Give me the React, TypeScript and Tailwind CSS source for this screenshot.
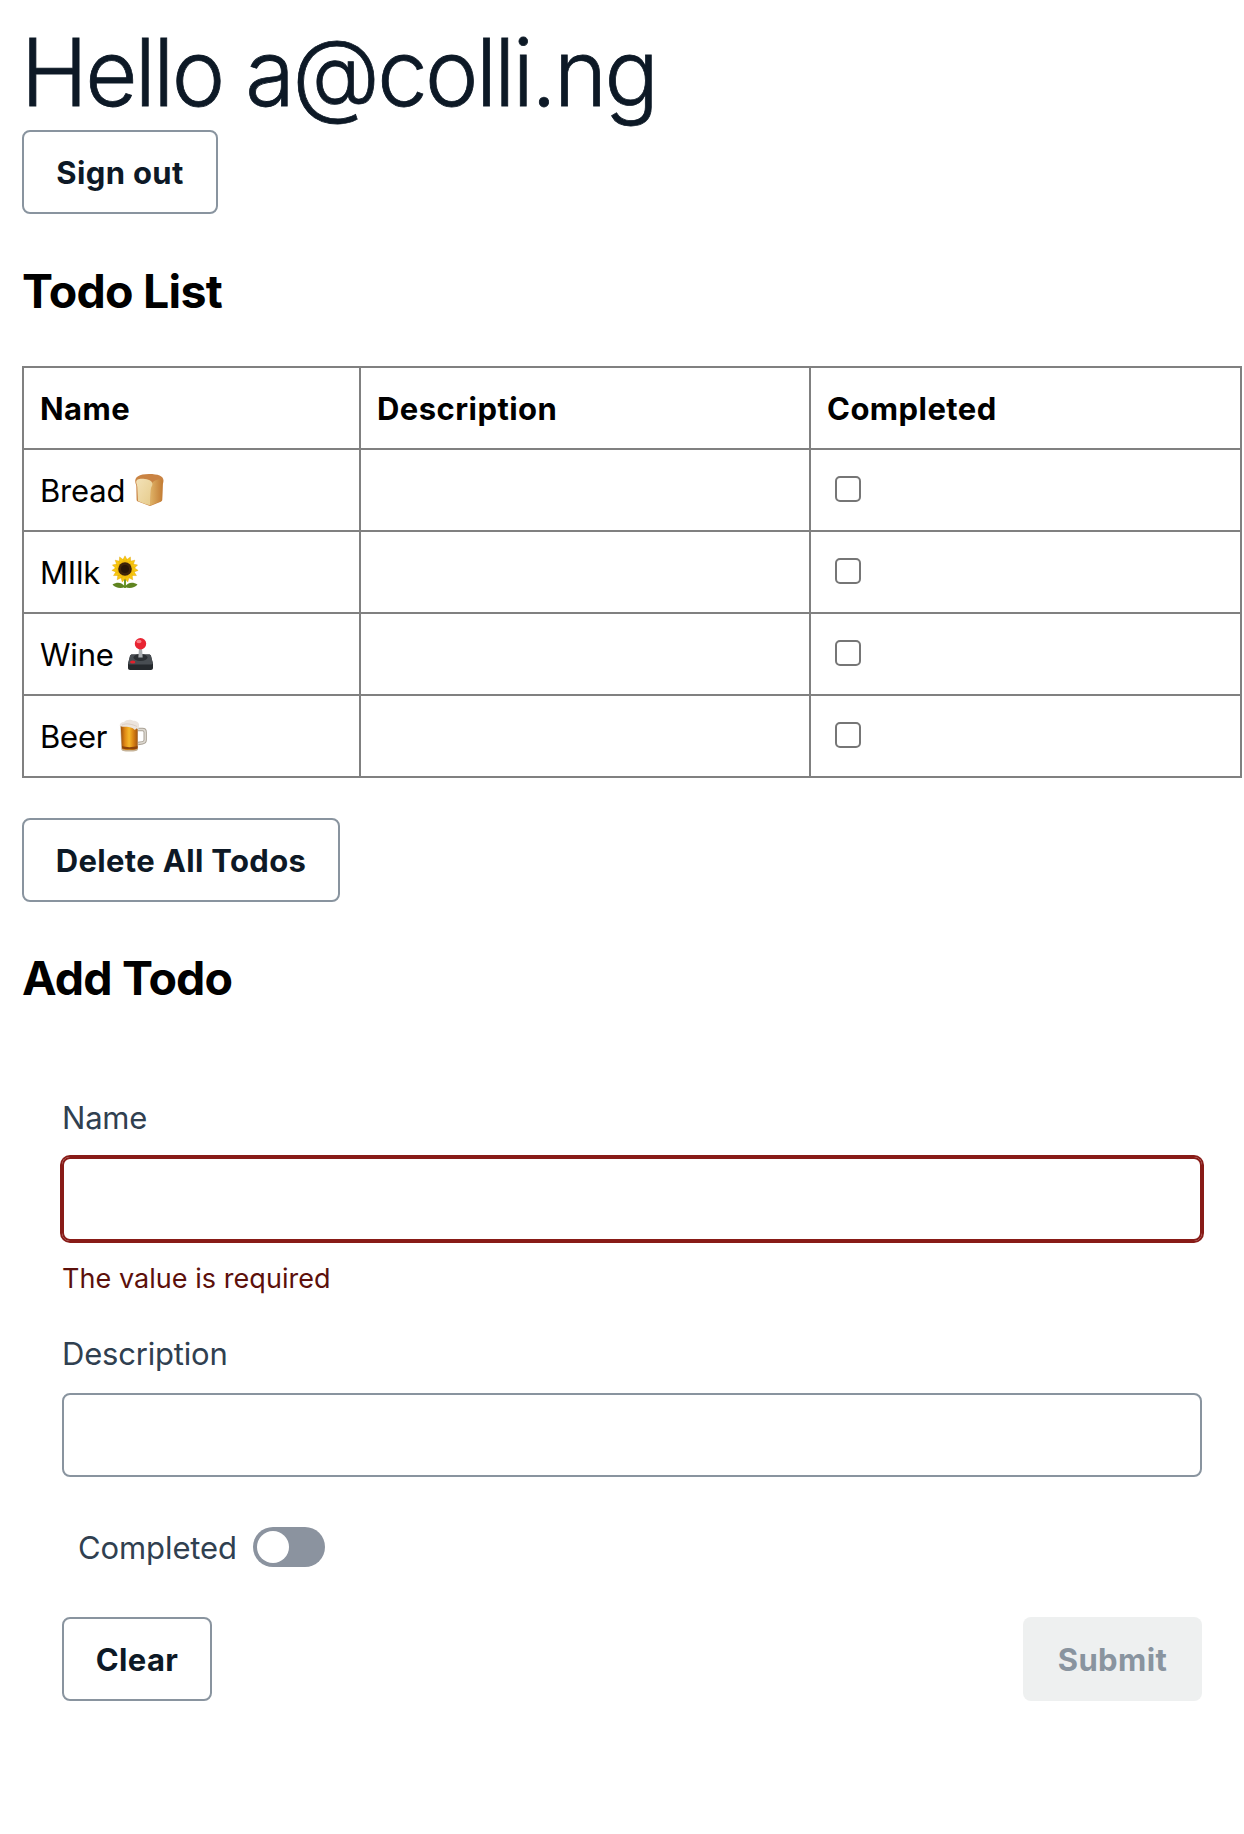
import type { ReactNode } from "react";

function Bread() {
  return (
    <svg width="32" height="34" viewBox="0 0 32 34" aria-label="bread">
      <defs>
        <linearGradient id="side" x1="0" x2="1">
          <stop offset="0" stopColor="#e0b468" />
          <stop offset="1" stopColor="#c27b33" />
        </linearGradient>
        <linearGradient id="slice" x1="0" x2="1" y2="1">
          <stop offset="0" stopColor="#f3e2b8" />
          <stop offset="1" stopColor="#e6cb8b" />
        </linearGradient>
      </defs>
      <path d="M1.300 9C.6 4 5 1 15 1c9 0 14.500 2 14.500 6.500 0 2-.8 3.500-.9 5l-.3 14c0 1-.5 1.600-1.500 2.200L17.500 32.500c-1 .5-2 .5-3 0L4 28.500c-1-.4-1.400-1-1.400-2L2.300 13c0-1.500-.8-2-1-4Z" fill="#c98343" />
      <path d="M17 14c-.5-4 3-6.500 7-7.500 3-.6 5 .3 4.800 3L28 26.500c0 .8-.4 1.300-1.200 1.700L16 32.500Z" fill="url(#side)" />
      <path d="M2.200 9.500C2 6 6 5.300 11 6c5 .8 8 2.500 7.300 6-.3 1.500-1.300 2-1.400 4L16 32.200c-4-1-8-2.300-12-4.200L3.300 14c0-2-1-3-1.100-4.500Z" fill="url(#slice)" />
    </svg>
  );
}

const PETALS = [0, 24, 48, 72, 96, 120, 144, 168, 192, 216, 240, 264, 288, 312, 336];

function Sunflower() {
  return (
    <svg width="28" height="34" viewBox="0 0 28 34" aria-label="sunflower">
      <path d="M13 24h2v9h-2z" fill="#6d9a2b" />
      <path d="M14 32C11 27 6 27 1.500 29.500 4 33 10 34 14 32ZM14 32c3-5 8-5 12.500-2.500C24 33 18 34 14 32Z" fill="#5f8420" />
      {PETALS.map((angle) => (
        <path key={angle} d="M14 14L11.200 6 14 .8 16.800 6Z" fill="#f8c80f" stroke="#e0a208" strokeWidth=".4" transform={`rotate(${angle} 14 14)`} />
      ))}
      <circle cx="14" cy="14" r="8.300" fill="#f3bd0c" />
      <circle cx="14" cy="14" r="6.800" fill="#3f2409" />
      <circle cx="14" cy="14" r="4" fill="#281606" />
    </svg>
  );
}

function Joystick() {
  return (
    <svg width="28" height="34" viewBox="0 0 28 34" aria-label="joystick">
      <path d="M5 17.500h17c1 0 1.700.5 2 1.500l2 8v4c0 1.200-1 2-2 2H3c-1.200 0-2-.8-2-2v-4l2-8c.3-1 1-1.500 2-1.500Z" fill="#25292d" />
      <path d="M5 17.500h17c1 0 1.700.5 2 1.500l1.800 7c0 1-.8 1.500-1.800 1.500H3c-1 0-1.800-.5-1.800-1.500L3 19c.3-1 1-1.500 2-1.500Z" fill="#484d52" />
      <ellipse cx="13.500" cy="20.500" rx="7" ry="3.500" fill="#2b2f33" />
      <path d="M12 11h3l.7 9.500h-4.400Z" fill="#a9adb0" />
      <circle cx="13.500" cy="6.800" r="5.700" fill="#e82432" />
      <ellipse cx="12" cy="4.500" rx="2.600" ry="1.800" fill="#fa7d85" />
      <ellipse cx="5.700" cy="25" rx="2.700" ry="1.600" fill="#e2202b" />
    </svg>
  );
}

function Beer() {
  return (
    <svg width="30" height="34" viewBox="0 0 30 34" aria-label="beer">
      <defs>
        <linearGradient id="ale" x1="0" x2="1">
          <stop offset="0" stopColor="#9c4d0c" />
          <stop offset=".25" stopColor="#e08a16" />
          <stop offset=".5" stopColor="#f5b82a" />
          <stop offset=".75" stopColor="#d98313" />
          <stop offset="1" stopColor="#a4560f" />
        </linearGradient>
      </defs>
      <path d="M19 10.500h4.500c1.700 0 2.700 1 2.700 2.700v7.600c0 1.700-1 2.700-2.700 3L19 24.500" fill="none" stroke="#aaa296" strokeWidth="3.400" />
      <path d="M19 10.500h4.500c1.700 0 2.700 1 2.700 2.700v7.600c0 1.700-1 2.700-2.700 3L19 24.500" fill="none" stroke="#dedad2" strokeWidth="1.400" />
      <path d="M1.300 6h17.700v24c0 2-3 2.500-8.500 2.500S2.300 32 2.300 30Z" fill="#c6b398" />
      <path d="M1.800 7h16.700v22c0 1.500-3 2-8 2s-7.500-.5-7.500-2Z" fill="url(#ale)" />
      <path d="M3 27c4 1.500 11 1.500 15.500 0v2.200c-3 1.700-12 1.700-15.200 0Z" fill="#8d430a" />
      <path d="M.8 7C.5 4 3 3.300 5 3c2-2.500 7-2.700 9-1.300C18 1.500 21 4 20 8c-.3 2-1.300 3-2 1.200-1.500.5-2.300 2.800-3.300.8-1.200-1.500-2-1-3-1.500C8 7 5 8.500 2.500 7.500Z" fill="#ece4dd" />
      <path d="M3 6c4-2 10-1 15 1.500" fill="none" stroke="#d6c8bd" strokeWidth=".8" />
    </svg>
  );
}

const todos: { name: string; icon: ReactNode; gap: string }[] = [
  { name: "Bread", icon: <Bread />, gap: "left-[94px]" },
  { name: "MIlk", icon: <Sunflower />, gap: "left-[71px]" },
  { name: "Wine", icon: <Joystick />, gap: "left-[87px]" },
  { name: "Beer", icon: <Beer />, gap: "left-[79px]" },
];

const button = "h-[84px] rounded-lg border-2 border-[#89949f] pt-[2px] font-bold text-[#0d1926] text-[31px] leading-[48px] tracking-[0.35px] whitespace-nowrap";

export default function App() {
  return (
    <main className="h-[1834px] w-[1244px] overflow-hidden bg-white pl-[22px] font-['Inter',sans-serif] text-[31px] leading-[48px] tracking-[-0.2px] text-black">
      <h1 className="mt-[12px] -ml-px h-[118px] origin-left scale-x-[0.97] text-[93px] leading-[121px] font-light tracking-[-2.7px] whitespace-nowrap text-[#0d1926] [-webkit-text-stroke:0.8px_#0d1926]">Hello a@colli.ng</h1>
      <button className={`${button} block w-[196px]`}>Sign out</button>

      <h2 className="mt-[48px] h-[58px] text-[46.500px] leading-[58px] font-bold tracking-[-0.75px]">Todo List</h2>

      <table className="mt-[46px] w-[1220px] table-fixed border-separate border-spacing-0 border-t-2 border-l-2 border-[#808080]">
        <colgroup>
          <col className="w-[337px]" />
          <col className="w-[450px]" />
          <col className="w-[431px]" />
        </colgroup>
        <thead>
          <tr className="h-[82px] text-left">
            {["Name", "Description", "Completed"].map((title) => (
              <th key={title} className="border-r-2 border-b-2 border-[#808080] p-0 pt-[2px] pl-[16px] font-bold tracking-[0.45px]">{title}</th>
            ))}
          </tr>
        </thead>
        <tbody>
          {todos.map(({ name, icon, gap }) => (
            <tr key={name} className="h-[82px]">
              <td className="border-r-2 border-b-2 border-[#808080] p-0 pt-[2px] pl-[16px]">
                <div className="relative">
                  {name}
                  <span className={`absolute top-[6px] ${gap}`}>{icon}</span>
                </div>
              </td>
              <td className="border-r-2 border-b-2 border-[#808080] p-0" />
              <td className="border-r-2 border-b-2 border-[#808080] p-0 pl-[24px]">
                <input type="checkbox" className="mb-[2px] block size-[26px] appearance-none rounded-[5px] border-2 border-[#767676] bg-white" />
              </td>
            </tr>
          ))}
        </tbody>
      </table>

      <button className={`${button} mt-[40px] block w-[318px]`}>Delete All Todos</button>

      <h2 className="mt-[47px] h-[58px] text-[46.500px] leading-[58px] font-bold tracking-[-0.85px]">Add Todo</h2>

      <form className="ml-[40px] flex w-[1140px] flex-col pt-[86px] text-[#304050]">
        <label className="h-[48px] leading-[50px]">Name</label>
        <input className="mt-[16px] h-[84px] rounded-lg border-2 border-[#881b17] shadow-[0_0_0_2px_#881b17] outline-none" />
        <p className="mt-[16px] h-[42px] text-[27px] leading-[43px] tracking-[0.05px] text-[#5c100b]">The value is required</p>
        <label className="mt-[30px] h-[48px] leading-[50px]">Description</label>
        <input className="mt-[16px] h-[84px] rounded-lg border-2 border-[#89949f] outline-none" />
        <label className="mt-[46px] flex h-[48px] items-center pl-[16px]">
          <span className="w-[175px] pt-[2px] tracking-[-0.1px]">Completed</span>
          <span className="flex h-[40px] w-[72px] items-center rounded-full bg-[#8b939f] p-[4px]">
            <span className="size-[32px] rounded-full bg-white" />
          </span>
        </label>
        <div className="mt-[46px] flex justify-between">
          <button type="button" className={`${button} w-[150px]`}>Clear</button>
          <button type="button" disabled className="h-[84px] w-[179px] rounded-lg bg-[#eef0f0] pt-[2px] text-[31px] leading-[48px] font-bold tracking-[0.4px] text-[#89949f]">Submit</button>
        </div>
      </form>
    </main>
  );
}
